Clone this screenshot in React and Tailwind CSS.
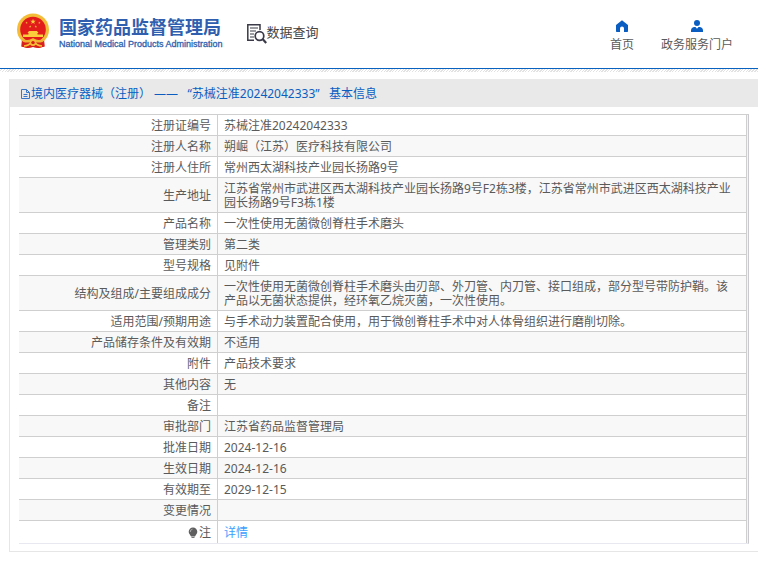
import React from "react";

const rows = [
  ["注册证编号", "苏械注准20242042333"],
  ["注册人名称", "朔崛（江苏）医疗科技有限公司"],
  ["注册人住所", "常州西太湖科技产业园长扬路9号"],
  ["生产地址", "江苏省常州市武进区西太湖科技产业园长扬路9号F2栋3楼，江苏省常州市武进区西太湖科技产业园长扬路9号F3栋1楼"],
  ["产品名称", "一次性使用无菌微创脊柱手术磨头"],
  ["管理类别", "第二类"],
  ["型号规格", "见附件"],
  ["结构及组成/主要组成成分", "一次性使用无菌微创脊柱手术磨头由刃部、外刀管、内刀管、接口组成，部分型号带防护鞘。该产品以无菌状态提供，经环氧乙烷灭菌，一次性使用。"],
  ["适用范围/预期用途", "与手术动力装置配合使用，用于微创脊柱手术中对人体骨组织进行磨削切除。"],
  ["产品储存条件及有效期", "不适用"],
  ["附件", "产品技术要求"],
  ["其他内容", "无"],
  ["备注", ""],
  ["审批部门", "江苏省药品监督管理局"],
  ["批准日期", "2024-12-16"],
  ["生效日期", "2024-12-16"],
  ["有效期至", "2029-12-15"],
  ["变更情况", ""],
];

const star = "M0-1 .24-.31.95-.31.38.12.59.81 0 .4-.59.81-.38.12-.95-.31-.24-.31Z";

function Emblem() {
  return (
    <svg className="h-9 w-8" viewBox="0 0 32 36" aria-hidden="true">
      <path d="M5 25h22l.5 8.500-6 1.500-5.500-1-5.500 1-6-1.500Z" fill="#d8201c" />
      <circle cx="16" cy="16.500" r="16" fill="#f3bd38" />
      <path d="M5 28.500h22l.5 5-6 1.500-5.500-1-5.500 1-6-1.500Z" fill="#d8201c" />
      <circle cx="16" cy="16.500" r="12.800" fill="#e21b1b" />
      <g fill="#fbcf3c">
        <path transform="translate(16 8.600) scale(2.900)" d={star} />
        <path transform="translate(9.600 9.800) scale(1.300)" d={star} />
        <path transform="translate(22.400 9.800) scale(1.300)" d={star} />
        <path transform="translate(13.200 13.600) scale(1.300)" d={star} />
        <path transform="translate(18.800 13.600) scale(1.300)" d={star} />
        <path d="M12 18h8l1.500 2h-1v1.500h5.500v2.500H6v-2.500h5.500V20h-1Z" />
      </g>
      <path d="M4.500 26q5.500 1.500 8.500.500l3-1.500 3 1.500q3 1 8.500-.500l-2 3q-4 1-6.500 0l-3-1-3 1q-2.500 1-6.500 0Z" fill="#f0b233" />
      <circle cx="16" cy="29.500" r="2.600" fill="none" stroke="#f5bd35" strokeWidth="1.600" />
      <path d="M7 33q5-.5 6.500-3M25 33q-5-.5-6.500-3" fill="none" stroke="#f5bd35" strokeWidth="1.600" />
    </svg>
  );
}

function QueryIcon() {
  return (
    <svg className="h-5 w-5" viewBox="0 0 20 20" fill="none" stroke="#3a3a48" aria-hidden="true">
      <path d="M13 6V.8H.8v15.400H7" strokeWidth="1.500" />
      <path d="M3 4h8M3 7h6M3 10h4M3 13h4" strokeWidth="1.200" />
      <circle cx="12.500" cy="12" r="4.300" strokeWidth="1.700" />
      <path d="m15.800 15.300 3.400 3.700" strokeWidth="2.200" />
    </svg>
  );
}

function HomeIcon() {
  return (
    <svg className="h-3 w-3" viewBox="0 0 12 12" fill="#0a5ec2" aria-hidden="true">
      <path d="M6 .3 12 5v6.200a.7.7 0 0 1-.7.700H8V8.500a2 2 0 0 0-4 0v3.400H.7a.7.7 0 0 1-.7-.7V5Z" />
    </svg>
  );
}

function UserIcon() {
  return (
    <svg className="h-3 w-3" viewBox="0 0 12 12" fill="#0a5ec2" aria-hidden="true">
      <circle cx="6" cy="3" r="3" />
      <path d="M0 12v-1.500C0 8.500 1.500 7 3.500 7h1L6 8.700 7.500 7h1C10.500 7 12 8.500 12 10.500V12Z" />
    </svg>
  );
}

function DocIcon() {
  return (
    <svg className="h-3 w-[11px]" viewBox="0 0 11 12" fill="none" stroke="#3b77c8" aria-hidden="true">
      <path d="M1.500 1.500h5l3 3v6h-8ZM6.500 1.500v3h3M3.500 6.500h4M3.500 8.500h4" />
    </svg>
  );
}

function BulbIcon() {
  return (
    <svg className="h-3 w-[10px]" viewBox="0 0 10 12" aria-hidden="true">
      <path d="M5 .5a4.300 4.300 0 0 1 4.300 4.300C9.300 7 7.500 8 7 9.500H3C2.500 8 .7 7 .7 4.800A4.300 4.300 0 0 1 5 .5Z" fill="#5f5f5f" />
      <path d="M3.500 10.500h3" stroke="#777" />
      <path d="M2.300 5A2.600 2.600 0 0 1 4.500 2.200" fill="none" stroke="#ccc" strokeWidth=".7" />
    </svg>
  );
}

export default function App() {
  return (
    <div className="min-h-screen bg-white font-['Noto_Sans','Noto_Sans_CJK_SC',sans-serif] text-xs leading-[14px] text-[#5a5a5a]">
      <header className="flex h-[69px] items-start border-b border-[#0a62c0] pl-[17px] pr-[25px]">
        <a href="#home" className="flex gap-[10px] pt-[13px] text-[#2f5fae]">
          <Emblem />
          <span className="flex flex-col pt-1">
            <span className="text-lg leading-5 font-bold">国家药品监督管理局</span>
            <span className="font-['Liberation_Sans',sans-serif] text-[9px] leading-[14px] whitespace-nowrap [-webkit-text-stroke:0.3px]">National Medical Products Administration</span>
          </span>
        </a>
        <a href="#query" className="ml-6 flex pt-6 text-[13px] leading-4 text-[#444]">
          <QueryIcon />
          <span>数据查询</span>
        </a>
        <nav className="ml-auto flex gap-[27px] pt-5">
          <a href="#index" className="flex flex-col items-center gap-[6px]">
            <HomeIcon />
            <span>首页</span>
          </a>
          <a href="#portal" className="flex flex-col items-center gap-[6px]">
            <UserIcon />
            <span>政务服务门户</span>
          </a>
        </nav>
      </header>
      <div className="h-[3px] bg-[repeating-linear-gradient(135deg,#fff_0,#fff_1px,#e2e2e2_1px,#e2e2e2_2px)]" />

      <main className="mt-[7px] ml-[9px] border-b border-l border-[#e6e6e6] pb-[7px]">
        <h1 className="flex h-7 items-center bg-[#e9e9e9] pt-px pl-[10px] text-[#0a5ec2]">
          <DocIcon />
          <span className="whitespace-pre">境内医疗器械（注册） ——   “苏械注准20242042333”   基本信息</span>
        </h1>
        <div className="mt-[7px] mr-[9px] ml-[9px] border-t border-r border-b border-t-[#cfcfcf] border-r-[#cacace] border-b-[#e8e8f0] bg-[#f4f4f8] pr-px">
          <table className="w-full table-fixed border-separate border-spacing-0 bg-white">
            <tbody>
              {rows.map(([label, value], i) => (
                <tr key={label} className={i % 2 ? "bg-[#f8f8f8]" : "bg-white"}>
                  <th scope="row" className="w-[199px] border-r border-b border-[#cfcfcf] pt-1 pr-[6px] pb-[2px] text-right font-normal">{label}</th>
                  <td className="h-[21px] border-r border-b border-[#cfcfcf] pt-1 pr-[10px] pb-[2px] pl-[6px]">{value}</td>
                </tr>
              ))}
              <tr>
                <th scope="row" className="border-r border-[#cfcfcf] pt-[5px] pr-[6px] pb-[3px] font-normal">
                  <span className="flex items-center justify-end gap-px"><BulbIcon />注</span>
                </th>
                <td className="border-r border-[#cfcfcf] pt-[5px] pb-[3px] pl-[6px]">
                  <a href="#detail" className="text-[#409eff]">详情</a>
                </td>
              </tr>
            </tbody>
          </table>
        </div>
      </main>
    </div>
  );
}
